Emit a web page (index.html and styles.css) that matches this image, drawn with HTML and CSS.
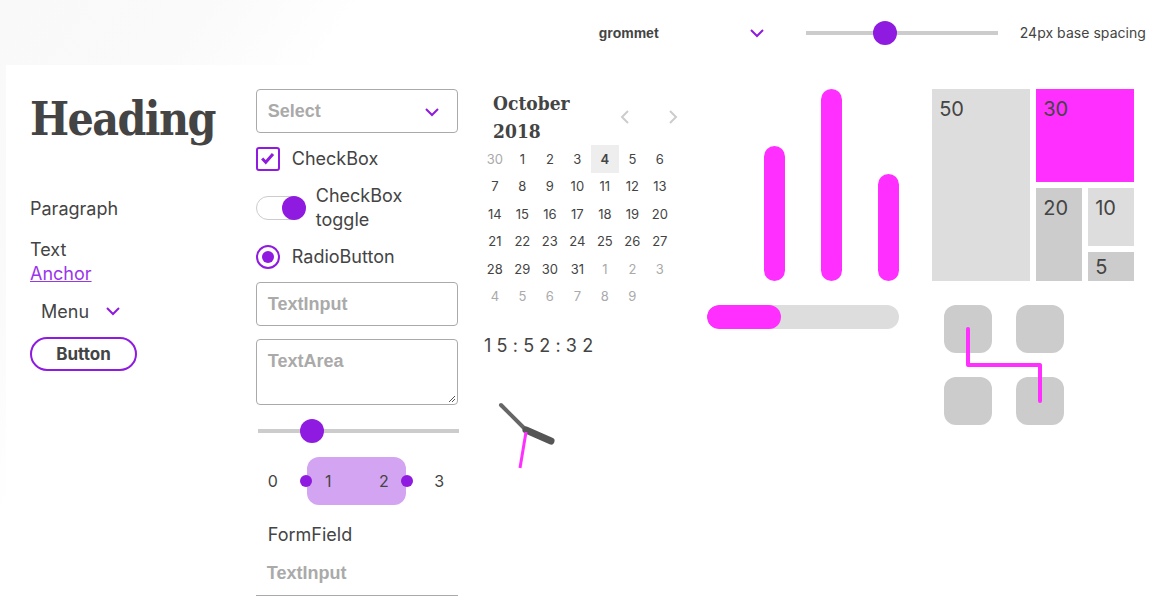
FILE: index.html
```html
<!DOCTYPE html>
<html lang="en">
<head>
<meta charset="utf-8">
<title>Grommet theme</title>
<link rel="stylesheet" href="styles.css">
</head>
<body>
<header class="topbar">
  <div class="theme-select">
    <span class="theme-name">grommet</span>
    <svg class="chev" viewBox="0 0 24 24" width="24" height="24"><path d="M18 9l-6 6-6-6" fill="none" stroke-width="2"/></svg>
  </div>
  <div class="top-range"><div class="track"></div><div class="thumb top-thumb"></div></div>
  <span class="spacing">24px base spacing</span>
</header>

<main class="panel">
  <section class="col col1">
    <h1 class="heading">Heading</h1>
    <p class="paragraph">Paragraph</p>
    <div class="text-block">
      <span class="plain">Text</span>
      <a class="anchor" href="#">Anchor</a>
    </div>
    <div class="menu"><span>Menu</span><svg class="chev" viewBox="0 0 24 24" width="24" height="24"><path d="M18 9l-6 6-6-6" fill="none" stroke-width="2"/></svg></div>
    <button class="button" type="button">Button</button>
  </section>

  <section class="col col2">
    <div class="select box"><span class="ph">Select</span><svg class="chev" viewBox="0 0 24 24" width="24" height="24"><path d="M18 9l-6 6-6-6" fill="none" stroke-width="2"/></svg></div>
    <label class="row check-row">
      <span class="checkbox"><svg viewBox="0 0 24 24" width="20" height="20"><path d="M5 11.5l4.3 4.5 8.7-10" fill="none" stroke-width="3.6"/></svg></span>
      <span class="label">CheckBox</span>
    </label>
    <label class="row toggle-row">
      <span class="toggle"><span class="knob"></span></span>
      <span class="label toggle-label">CheckBox toggle</span>
    </label>
    <label class="row radio-row">
      <span class="radio"><span class="dot"></span></span>
      <span class="label">RadioButton</span>
    </label>
    <div class="input box"><span class="ph">TextInput</span></div>
    <div class="textarea box"><span class="ph">TextArea</span>
      <svg class="grip" viewBox="0 0 8 8" width="8" height="8"><path d="M7 1L1 7M7 4L4 7" stroke="#555" stroke-width="1"/></svg>
    </div>
    <div class="slider"><div class="track"></div><div class="thumb slider-thumb"></div></div>
    <div class="range-selector">
      <div class="band"></div>
      <span class="rs-label">0</span><span class="rs-label">1</span><span class="rs-label">2</span><span class="rs-label">3</span>
    </div>
    <div class="formfield">
      <span class="ff-label">FormField</span>
      <div class="ff-input"><span class="ph">TextInput</span></div>
    </div>
  </section>

  <section class="col col3">
    <div class="cal-head">
      <div class="cal-title">October<br>2018</div>
      <div class="cal-nav">
        <svg viewBox="0 0 24 24" width="24" height="24"><path d="M15 6l-6 6 6 6" fill="none" stroke="#ccc" stroke-width="2"/></svg>
        <svg viewBox="0 0 24 24" width="24" height="24"><path d="M9 6l6 6-6 6" fill="none" stroke="#ccc" stroke-width="2"/></svg>
      </div>
    </div>
    <div class="cal-grid">
      <span class="o">30</span><span>1</span><span>2</span><span>3</span><span class="sel">4</span><span>5</span><span>6</span>
      <span>7</span><span>8</span><span>9</span><span>10</span><span>11</span><span>12</span><span>13</span>
      <span>14</span><span>15</span><span>16</span><span>17</span><span>18</span><span>19</span><span>20</span>
      <span>21</span><span>22</span><span>23</span><span>24</span><span>25</span><span>26</span><span>27</span>
      <span>28</span><span>29</span><span>30</span><span>31</span><span class="o">1</span><span class="o">2</span><span class="o">3</span>
      <span class="o">4</span><span class="o">5</span><span class="o">6</span><span class="o">7</span><span class="o">8</span><span class="o">9</span><span></span>
    </div>
    <div class="digital">15:52:32</div>
    <svg class="analog" viewBox="0 0 96 96" width="96" height="96">
      <line x1="46" y1="48" x2="21" y2="23" stroke="#666" stroke-width="4" stroke-linecap="round"/>
      <line x1="46" y1="48" x2="71" y2="59" stroke="#555" stroke-width="7" stroke-linecap="round"/>
      <line x1="46" y1="50" x2="40" y2="86" stroke="#ff30ff" stroke-width="3"/>
    </svg>
  </section>

  <section class="col col4">
    <svg class="bars" viewBox="0 0 201 192" width="201" height="192">
      <line x1="67.5" y1="67.5" x2="67.5" y2="181.5" stroke="#ff30ff" stroke-width="21" stroke-linecap="round"/>
      <line x1="124.5" y1="10.5" x2="124.5" y2="181.5" stroke="#ff30ff" stroke-width="21" stroke-linecap="round"/>
      <line x1="181.5" y1="95.5" x2="181.5" y2="181.5" stroke="#ff30ff" stroke-width="21" stroke-linecap="round"/>
    </svg>
    <div class="meter"><div class="meter-fill" style="width: 38.5%"></div></div>
  </section>

  <section class="col col5">
    <div class="treemap">
      <div class="tm tm-light tm-50">50</div>
      <div class="tm-right">
        <div class="tm tm-accent tm-30">30</div>
        <div class="tm-bottom">
          <div class="tm tm-dark tm-20">20</div>
          <div class="tm-stack">
            <div class="tm tm-light tm-10">10</div>
            <div class="tm tm-dark tm-5">5</div>
          </div>
        </div>
      </div>
    </div>
    <div class="diagram">
      <div class="node"></div><div class="node"></div><div class="node"></div><div class="node"></div>
      <svg class="connection" viewBox="0 0 120 120" width="120" height="120"><path d="M24 24V60H96V96" fill="none" stroke="#ff30ff" stroke-width="4" stroke-linecap="round" stroke-linejoin="round"/></svg>
    </div>
  </section>
</main>
</body>
</html>
```

FILE: styles.css
```css
* { box-sizing: border-box; }
html, body { margin: 0; padding: 0; }
body {
  width: 1159px;
  height: 606px;
  overflow: hidden;
  font-family: Inter, "Open Sans", sans-serif;
  font-size: 18px;
  color: #444;
  background: linear-gradient(125deg, #f9f9f9 0, #fafafa 170px, #fff 300px);
}

.chev { stroke: #8e1bdf; flex: none; }

/* top bar */
.topbar {
  height: 65px;
  display: flex;
  align-items: center;
  justify-content: flex-end;
  padding-right: 13px;
}
.theme-select {
  width: 170px;
  display: flex;
  align-items: center;
  justify-content: space-between;
  margin-right: 37px;
}
.theme-name {
  font-family: "Liberation Sans", Arial, sans-serif;
  font-weight: bold;
  font-size: 14px;
  color: #444;
}
.top-range {
  position: relative;
  width: 192px;
  height: 24px;
  display: flex;
  align-items: center;
  margin-right: 22px;
}
.track { width: 100%; height: 4px; background: #ccc; }
.thumb {
  position: absolute;
  width: 24px; height: 24px;
  border-radius: 50%;
  background: #8e1bdf;
  top: 0;
}
.top-thumb { left: 67px; }
.spacing { font-size: 14px; letter-spacing: 0.05px; color: #444; }

/* panel */
.panel {
  margin-left: 6px;
  height: 541px;
  background: #fff;
  padding: 24px;
  display: grid;
  grid-template-columns: repeat(5, minmax(0, 1fr));
  column-gap: 24px;
  align-items: start;
}
.col { display: flex; flex-direction: column; min-width: 0; }

/* col1 */
.heading {
  margin: 0;
  font-family: "DejaVu Serif Condensed", "DejaVu Serif", serif;
  font-stretch: condensed;
  font-weight: bold;
  font-size: 46px;
  line-height: 60px;
  color: #444;
  letter-spacing: -1.6px;
  white-space: nowrap;
}
.paragraph { margin: 48px 0 0; line-height: 24px; }
.text-block { margin-top: 17px; display: flex; flex-direction: column; line-height: 24px; }
.anchor { color: #9b35ea; text-decoration: underline; align-self: flex-start; }
.menu {
  margin-top: 13px;
  height: 24px;
  display: flex;
  align-items: center;
  gap: 12px;
  padding-left: 11px;
}
.button {
  margin-top: 14px;
  align-self: flex-start;
  width: 107px;
  height: 34px;
  border: 2px solid #8e1bdf;
  border-radius: 18px;
  background: #fff;
  font-family: Inter, "Open Sans", sans-serif;
  font-weight: bold;
  font-size: 17px;
  color: #444;
  padding: 0;
}

/* col2 */
.col2 { gap: 13px; }
.box {
  border: 1px solid #aaa;
  border-radius: 4px;
  display: flex;
  align-items: center;
  padding: 0 11px;
  position: relative;
}
.ph {
  font-family: "Liberation Sans", Arial, sans-serif;
  font-weight: bold;
  font-size: 18px;
  color: #aaa;
}
.select { height: 44px; justify-content: space-between; padding-right: 13px; padding-top: 1px; }
.row { display: flex; align-items: center; gap: 12px; }
.label { line-height: 24px; }
.checkbox {
  width: 24px; height: 24px;
  border: 2px solid #8e1bdf;
  border-radius: 3px;
  display: flex; align-items: center; justify-content: center;
  stroke: #8e1bdf;
}
.check-row { margin-top: 1px; }
.toggle {
  position: relative;
  width: 48px; height: 24px;
  border: 1px solid #ccc;
  border-radius: 12px;
  background: #fff;
  flex: none;
}
.knob {
  position: absolute;
  width: 24px; height: 24px;
  right: -3px; top: -1px;
  border-radius: 50%;
  background: #8e1bdf;
}
.toggle-label { max-width: 110px; }
.radio {
  width: 24px; height: 24px;
  border: 2px solid #8e1bdf;
  border-radius: 50%;
  display: flex; align-items: center; justify-content: center;
}
.dot { width: 12px; height: 12px; border-radius: 50%; background: #8e1bdf; }
.input { height: 44px; padding-top: 1px; }
.textarea { height: 66px; align-items: flex-start; padding-top: 11px; }
.grip { position: absolute; right: 1px; bottom: 1px; }
.slider {
  position: relative;
  height: 24px;
  margin-top: 1px;
  display: flex; align-items: center;
  padding-left: 2px;
  width: 203px;
}
.slider-thumb { left: 44px; }
.range-selector {
  position: relative;
  height: 48px;
  margin-top: 1px;
  display: flex;
  align-items: center;
  padding-left: 12px;
  gap: 45.5px;
}
.band {
  position: absolute;
  left: 51px; top: 0;
  width: 99px; height: 48px;
  border-radius: 12px;
  background: #d3a4f1;
}
.band::before, .band::after {
  content: "";
  position: absolute;
  top: 18px;
  width: 12px; height: 12px;
  border-radius: 50%;
  background: #8e1bdf;
}
.band::before { left: -7px; }
.band::after { right: -7px; }
.rs-label { position: relative; width: 10px; text-align: center; font-size: 16px; }
.formfield { display: flex; flex-direction: column; margin-top: 5px; }
.ff-label { line-height: 24px; padding-left: 12px; }
.ff-input {
  height: 49px;
  display: flex; align-items: center;
  padding-left: 11px;
  padding-top: 5px;
  border-bottom: 1px solid #aaa;
}

/* col3 */
.col3 { margin-left: -0.5px; }
.cal-head {
  width: 204px;
  display: flex;
  align-items: center;
  justify-content: space-between;
  padding-left: 12px;
}
.cal-title {
  font-family: "DejaVu Serif Condensed", "DejaVu Serif", serif;
  font-stretch: condensed;
  font-weight: bold;
  font-size: 19px;
  line-height: 28px;
  color: #444;
}
.cal-nav { display: flex; gap: 24px; }
.cal-grid {
  display: grid;
  grid-template-columns: repeat(7, 27.5px);
  grid-auto-rows: 27.5px;
  font-size: 13px;
}
.cal-grid span { display: flex; align-items: center; justify-content: center; color: #444; }
.cal-grid span.o { color: #aaa; }
.cal-grid span.sel { background: #eee; font-weight: 600; }
.digital {
  margin-top: 24px;
  padding-left: 3px;
  line-height: 24px;
  font-size: 18px;
  letter-spacing: 5.2px;
}
.analog { margin-top: 24px; margin-left: -1px; }

/* col4 */
.meter {
  margin-top: 24px;
  width: 192px; height: 24px;
  border-radius: 12px;
  background: #ddd;
  overflow: hidden;
}
.meter-fill { height: 100%; border-radius: 12px; background: #ff30ff; }

/* col5 */
.col5 { margin-left: -1px; }
.treemap { display: flex; gap: 6px; width: 202px; height: 192px; }
.tm { padding: 6px 7px; font-size: 20px; line-height: 28px; color: #444; flex-shrink: 0; }
.tm-light { background: #ddd; }
.tm-dark { background: #ccc; }
.tm-accent { background: #ff30ff; }
.tm-50 { width: 98px; }
.tm-right { width: 98px; display: flex; flex-direction: column; gap: 6px; }
.tm-30 { height: 93px; }
.tm-bottom { flex: 1 1 0; min-height: 0; display: flex; gap: 6px; }
.tm-20 { width: 46px; }
.tm-stack { flex: 1; min-height: 0; display: flex; flex-direction: column; gap: 6px; }
.tm-10 { height: 58px; }
.tm-5 { flex: 1 1 0; min-height: 0; padding-top: 1px; line-height: 28px; }
.diagram {
  position: relative;
  margin-top: 24px;
  margin-left: 12px;
  display: grid;
  grid-template-columns: 48px 48px;
  grid-auto-rows: 48px;
  gap: 24px;
}
.node { background: #ccc; border-radius: 12px; }
.connection { position: absolute; left: 0; top: 0; }
```
